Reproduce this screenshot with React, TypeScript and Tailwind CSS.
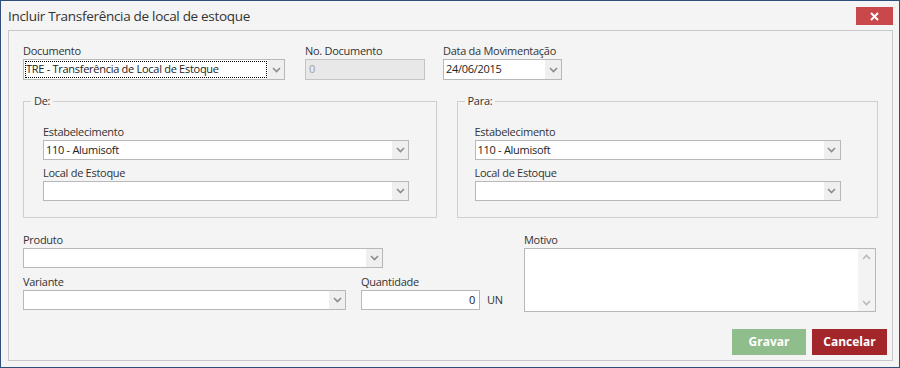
import React from 'react'

const Chevron = ({ up = false }: { up?: boolean }) => (
  <svg width="9" height="6" viewBox="0 0 9 6" className={up ? 'rotate-180' : ''}>
    <path d="M1 1 L4.5 4.5 L8 1" stroke="#8c8c8c" strokeWidth="1.6" fill="none" />
  </svg>
)

function Combo({ className, value = '', focused = false }: { className: string; value?: string; focused?: boolean }) {
  return (
    <div className={`flex border border-[#b8b8b8] bg-white ${className}`}>
      <div className="flex-1 min-w-0 p-px">
        <div
          className={`h-full flex items-center pl-px text-[#222] whitespace-nowrap overflow-hidden ${
            focused ? 'outline-1 outline-dotted outline-black -outline-offset-1' : ''
          }`}
        >
          {value}
        </div>
      </div>
      <div className="w-[16px] bg-[#efefef] flex items-center justify-center">
        <Chevron />
      </div>
    </div>
  )
}

function Field({ label, className, children }: { label: string; className: string; children: React.ReactNode }) {
  return (
    <div className={`flex flex-col ${className}`}>
      <span className="leading-[15px] mb-px text-[#333]">{label}</span>
      {children}
    </div>
  )
}

function Group({ title, className, children }: { title: string; className: string; children: React.ReactNode }) {
  return (
    <fieldset className={`border border-[#cfcfcf] pb-[16px] ${className}`}>
      <legend className="ml-[7px] px-[3px] leading-[14px] text-[#333]">{title}</legend>
      {children}
    </fieldset>
  )
}

export default function App() {
  return (
    <div
      className="w-[900px] h-[368px] border border-[#2f4e7c] bg-[#f4f4f4] flex flex-col text-[11px] tracking-[-0.28px]"
      style={{ fontFamily: '"Open Sans", "Noto Sans", sans-serif' }}
    >
      {/* title bar */}
      <div className="h-[29px] flex items-start justify-between pl-[7px] pr-[6px]">
        <span className="mt-[5px] text-[13.5px] leading-[20px] text-[#333] tracking-[-0.3px]">Incluir Transferência de local de estoque</span>
        <button className="mt-[6px] w-[37px] h-[18px] bg-[#c9484a] flex items-center justify-center">
          <svg width="9" height="9" viewBox="0 0 9 9">
            <path d="M1 1 L8 8 M8 1 L1 8" stroke="#fff" strokeWidth="2" />
          </svg>
        </button>
      </div>

      {/* content panel */}
      <div className="flex-1 ml-[7px] mr-[6px] mb-[6px] border border-[#c8c8c8] bg-[#f4f4f4] flex flex-col pl-[14px] pr-[14px] pt-[12px]">
        <div className="flex">
          <Field label="Documento" className="w-[262px]">
            <Combo className="h-[21px]" value="TRE - Transferência de Local de Estoque" focused />
          </Field>
          <Field label="No. Documento" className="w-[120px] ml-[20px]">
            <div className="h-[21px] border border-[#c4c4c4] bg-[#e8e8e8] flex items-center pl-[3px] text-[#a0a0a0]">0</div>
          </Field>
          <Field label="Data da Movimentação" className="w-[119px] ml-[18px]">
            <Combo className="h-[21px]" value="24/06/2015" />
          </Field>
        </div>

        <div className="flex gap-[20px] mt-[14px]">
          <Group title="De:" className="w-[414px]">
            <div className="flex flex-col gap-[5px] pt-[16px] pl-[19px]">
              <Field label="Estabelecimento" className="w-[366px]">
                <Combo className="h-[20px]" value="110 - Alumisoft" />
              </Field>
              <Field label="Local de Estoque" className="w-[366px]">
                <Combo className="h-[20px]" />
              </Field>
            </div>
          </Group>
          <Group title="Para:" className="w-[422px]">
            <div className="flex flex-col gap-[5px] pt-[16px] pl-[17px]">
              <Field label="Estabelecimento" className="w-[366px]">
                <Combo className="h-[20px]" value="110 - Alumisoft" />
              </Field>
              <Field label="Local de Estoque" className="w-[366px]">
                <Combo className="h-[20px]" />
              </Field>
            </div>
          </Group>
        </div>

        <div className="flex mt-[14px]">
          <div className="flex flex-col gap-[6px] w-[501px]">
            <Field label="Produto" className="w-[360px]">
              <Combo className="h-[20px]" />
            </Field>
            <div className="flex items-end">
              <Field label="Variante" className="w-[323px]">
                <Combo className="h-[20px]" />
              </Field>
              <Field label="Quantidade" className="w-[119px] ml-[15px]">
                <div className="h-[20px] border border-[#b8b8b8] bg-white flex items-center justify-end pr-[4px] text-[#222]">0</div>
              </Field>
              <span className="ml-[7px] h-[20px] flex items-center text-[#333]">UN</span>
            </div>
          </div>
          <Field label="Motivo" className="w-[352px]">
            <div className="h-[64px] border border-[#b8b8b8] bg-white flex justify-end">
              <div className="w-[17px] bg-[#ececec] flex flex-col items-center justify-between py-[5px] opacity-60">
                <Chevron up />
                <Chevron />
              </div>
            </div>
          </Field>
        </div>

        <div className="flex justify-end gap-[6px] mt-auto mb-[5px] -mr-[9px]">
          <button className="w-[74px] h-[26px] bg-[#8fbd8b] text-white font-bold text-[12px] tracking-normal">Gravar</button>
          <button className="w-[75px] h-[26px] bg-[#a3262a] text-white font-bold text-[12px] tracking-normal">Cancelar</button>
        </div>
      </div>
    </div>
  )
}
